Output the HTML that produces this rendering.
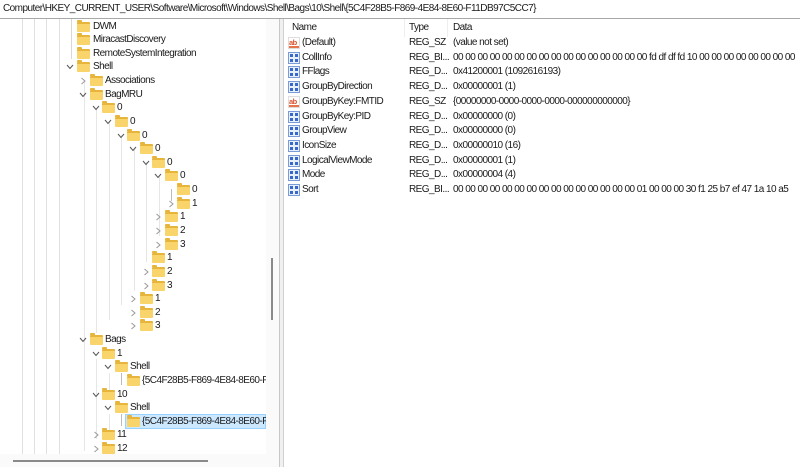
<!DOCTYPE html>
<html><head><meta charset="utf-8"><style>
*{margin:0;padding:0;box-sizing:border-box}
body{width:800px;height:467px;overflow:hidden;background:#fff;font-family:"Liberation Sans",sans-serif;font-size:10px;letter-spacing:-0.55px;color:#1a1a1a;position:relative}
.addr{position:absolute;left:0;top:0;width:800px;height:19px;border-bottom:1px solid #a8a8a8;padding:3px 0 0 3px;white-space:nowrap;overflow:hidden}
.tree{position:absolute;left:0;top:19px;width:279px;height:448px;background:#fff;overflow:hidden}
.vl{position:absolute;top:0;width:1px;height:448px;background:#e0e0e0}
.rows{position:absolute;left:0;top:0;width:266px;height:454px;overflow:hidden}
.r{position:absolute;height:14px;left:0;width:266px}
.f{position:absolute;top:2px;width:13px;height:10px;background:#f9d46b;border-top:2px solid #e8b53c;border-radius:1px}
.f:before{content:"";position:absolute;left:0;top:-4px;width:5px;height:2px;background:#e8b53c;border-radius:1px 1px 0 0}
.t{position:absolute;top:1px;white-space:nowrap}
.c{position:absolute;top:3px;width:8px;height:8px}
.sel{position:absolute;left:125px;top:414px;width:141px;height:15px;background:#cce8ff;border:1px solid #99d1ff}
.right{position:absolute;left:283px;top:19px;width:517px;height:448px;border-left:1px solid #d0d0d0;overflow:hidden}
.split{position:absolute;left:279px;top:19px;width:4px;height:448px;background:#f0f0f0;border-left:1px solid #c8c8c8}
.rr{position:absolute;left:0;height:15px;width:517px;white-space:nowrap}
.rr span{position:absolute;top:1px}
.ic{position:absolute;left:4px;top:1px;width:12px;height:12px}
</style></head><body>
<div class="addr">Computer\HKEY_CURRENT_USER\Software\Microsoft\Windows\Shell\Bags\10\Shell\{5C4F28B5-F869-4E84-8E60-F11DB97C5CC7}</div>
<div class="tree">
<div class="vl" style="left:22px"></div><div class="vl" style="left:34px"></div><div class="vl" style="left:46px"></div><div class="vl" style="left:59px"></div>
<div class="vl" style="left:71px;height:40px;background:#d8d8d8"></div>
<div class="vl" style="left:84px;top:62px;height:370px;background:#e6e6e6"></div>
<div class="vl" style="left:96px;top:89px;height:225px;background:#e6e6e6"></div>
<div class="vl" style="left:109px;top:103px;height:198px;background:#e6e6e6"></div>
<div class="vl" style="left:121px;top:116px;height:170px;background:#e6e6e6"></div>
<div class="vl" style="left:134px;top:130px;height:142px;background:#e6e6e6"></div>
<div class="vl" style="left:146px;top:143px;height:100px;background:#e6e6e6"></div>
<div class="vl" style="left:159px;top:157px;height:60px;background:#e6e6e6"></div>
<div class="vl" style="left:171px;top:170px;height:12px;background:#bbb"></div>
<div class="vl" style="left:96px;top:340px;height:80px;background:#e6e6e6"></div>
<div class="vl" style="left:109px;top:354px;height:20px;background:#e6e6e6"></div>
<div class="vl" style="left:121px;top:354px;height:12px;background:#bbb"></div>
<div class="vl" style="left:109px;top:395px;height:20px;background:#e6e6e6"></div>
<div class="vl" style="left:121px;top:395px;height:12px;background:#bbb"></div>
</div>
<div class="sel"></div>
<svg width="0" height="0" style="position:absolute"><defs>
<polyline id="dn" points="1,2 4,5.5 7,2" fill="none" stroke="#555" stroke-width="1"/>
<polyline id="rt" points="2.5,1 6,4 2.5,7" fill="none" stroke="#999" stroke-width="1"/>
</defs></svg>
<div class="rows">
<div class="r" style="top:19.5px"><div class="f" style="left:77px"></div><div class="t" style="left:93px">DWM</div></div>
<div class="r" style="top:33.1px"><div class="f" style="left:77px"></div><div class="t" style="left:93px">MiracastDiscovery</div></div>
<div class="r" style="top:46.8px"><div class="f" style="left:77px"></div><div class="t" style="left:93px">RemoteSystemIntegration</div></div>
<div class="r" style="top:60.4px"><svg class="c" style="left:66px"><use href="#dn"/></svg><div class="f" style="left:77px"></div><div class="t" style="left:93px">Shell</div></div>
<div class="r" style="top:74px"><svg class="c" style="left:79px"><use href="#rt"/></svg><div class="f" style="left:90px"></div><div class="t" style="left:105px">Associations</div></div>
<div class="r" style="top:87.7px"><svg class="c" style="left:79px"><use href="#dn"/></svg><div class="f" style="left:90px"></div><div class="t" style="left:105px">BagMRU</div></div>
<div class="r" style="top:101.3px"><svg class="c" style="left:92px"><use href="#dn"/></svg><div class="f" style="left:102px"></div><div class="t" style="left:117px">0</div></div>
<div class="r" style="top:114.9px"><svg class="c" style="left:104px"><use href="#dn"/></svg><div class="f" style="left:115px"></div><div class="t" style="left:130px">0</div></div>
<div class="r" style="top:128.5px"><svg class="c" style="left:117px"><use href="#dn"/></svg><div class="f" style="left:127px"></div><div class="t" style="left:142px">0</div></div>
<div class="r" style="top:142.2px"><svg class="c" style="left:129px"><use href="#dn"/></svg><div class="f" style="left:140px"></div><div class="t" style="left:155px">0</div></div>
<div class="r" style="top:155.8px"><svg class="c" style="left:142px"><use href="#dn"/></svg><div class="f" style="left:152px"></div><div class="t" style="left:167px">0</div></div>
<div class="r" style="top:169.4px"><svg class="c" style="left:154px"><use href="#dn"/></svg><div class="f" style="left:165px"></div><div class="t" style="left:180px">0</div></div>
<div class="r" style="top:183.1px"><div class="f" style="left:177px"></div><div class="t" style="left:192px">0</div></div>
<div class="r" style="top:196.7px"><svg class="c" style="left:167px"><use href="#rt"/></svg><div class="f" style="left:177px"></div><div class="t" style="left:192px">1</div></div>
<div class="r" style="top:210.3px"><svg class="c" style="left:154px"><use href="#rt"/></svg><div class="f" style="left:165px"></div><div class="t" style="left:180px">1</div></div>
<div class="r" style="top:224px"><svg class="c" style="left:154px"><use href="#rt"/></svg><div class="f" style="left:165px"></div><div class="t" style="left:180px">2</div></div>
<div class="r" style="top:237.6px"><svg class="c" style="left:154px"><use href="#rt"/></svg><div class="f" style="left:165px"></div><div class="t" style="left:180px">3</div></div>
<div class="r" style="top:251.2px"><div class="f" style="left:152px"></div><div class="t" style="left:167px">1</div></div>
<div class="r" style="top:264.8px"><svg class="c" style="left:142px"><use href="#rt"/></svg><div class="f" style="left:152px"></div><div class="t" style="left:167px">2</div></div>
<div class="r" style="top:278.5px"><svg class="c" style="left:142px"><use href="#rt"/></svg><div class="f" style="left:152px"></div><div class="t" style="left:167px">3</div></div>
<div class="r" style="top:292.1px"><svg class="c" style="left:129px"><use href="#rt"/></svg><div class="f" style="left:140px"></div><div class="t" style="left:155px">1</div></div>
<div class="r" style="top:305.7px"><svg class="c" style="left:129px"><use href="#rt"/></svg><div class="f" style="left:140px"></div><div class="t" style="left:155px">2</div></div>
<div class="r" style="top:319.4px"><svg class="c" style="left:129px"><use href="#rt"/></svg><div class="f" style="left:140px"></div><div class="t" style="left:155px">3</div></div>
<div class="r" style="top:333px"><svg class="c" style="left:79px"><use href="#dn"/></svg><div class="f" style="left:90px"></div><div class="t" style="left:105px">Bags</div></div>
<div class="r" style="top:346.6px"><svg class="c" style="left:92px"><use href="#dn"/></svg><div class="f" style="left:102px"></div><div class="t" style="left:117px">1</div></div>
<div class="r" style="top:360.3px"><svg class="c" style="left:104px"><use href="#dn"/></svg><div class="f" style="left:115px"></div><div class="t" style="left:130px">Shell</div></div>
<div class="r" style="top:373.9px"><div class="f" style="left:127px"></div><div class="t" style="left:142px">{5C4F28B5-F869-4E84-8E60-F1</div></div>
<div class="r" style="top:387.5px"><svg class="c" style="left:92px"><use href="#dn"/></svg><div class="f" style="left:102px"></div><div class="t" style="left:117px">10</div></div>
<div class="r" style="top:401.1px"><svg class="c" style="left:104px"><use href="#dn"/></svg><div class="f" style="left:115px"></div><div class="t" style="left:130px">Shell</div></div>
<div class="r" style="top:414.8px"><div class="f" style="left:127px"></div><div class="t" style="left:142px">{5C4F28B5-F869-4E84-8E60-F1</div></div>
<div class="r" style="top:428.4px"><svg class="c" style="left:92px"><use href="#rt"/></svg><div class="f" style="left:102px"></div><div class="t" style="left:117px">11</div></div>
<div class="r" style="top:442px"><svg class="c" style="left:92px"><use href="#rt"/></svg><div class="f" style="left:102px"></div><div class="t" style="left:117px">12</div></div>
</div>
<div style="position:absolute;left:266px;top:19px;width:13px;height:435px;background:#fafafa"></div>
<div style="position:absolute;left:271px;top:258px;width:2px;height:62px;background:#8a8a8a"></div>
<div style="position:absolute;left:0;top:454px;width:279px;height:13px;background:#fafafa"></div>
<div style="position:absolute;left:13px;top:460px;width:195px;height:2px;background:#8a8a8a"></div>
<div class="split"></div>
<div class="right">
<div style="position:absolute;left:120px;top:0;width:1px;height:18px;background:#eee"></div>
<div style="position:absolute;left:163px;top:0;width:1px;height:18px;background:#eee"></div>
<div class="rr" style="top:2px"><span style="left:8px">Name</span><span style="left:125px">Type</span><span style="left:169px">Data</span></div>
<svg width="0" height="0" style="position:absolute"><defs>
<g id="ab"><rect x="0.5" y="0.5" width="11" height="11" fill="#fff" stroke="#ddd"/><text x="1" y="8" font-size="7.5" font-family="Liberation Sans" font-weight="bold" fill="#d8502c">ab</text><rect x="1" y="9" width="10" height="2" fill="#e8734a"/></g>
<g id="bn"><rect x="0.5" y="0.5" width="11" height="11" fill="#e8f0fc" stroke="#7a9ad8"/><rect x="2" y="2" width="3" height="3" fill="#3a68c8"/><rect x="7" y="2" width="3" height="3" fill="#3a68c8"/><rect x="2" y="7" width="3" height="3" fill="#3a68c8"/><rect x="7" y="7" width="3" height="3" fill="#3a68c8"/></g>
</defs></svg>
<div class="rr" style="top:17px"><svg class="ic"><use href="#ab"/></svg><span style="left:18px">(Default)</span><span style="left:125px">REG_SZ</span><span style="left:169px">(value not set)</span></div>
<div class="rr" style="top:31.7px"><svg class="ic"><use href="#bn"/></svg><span style="left:18px">CollInfo</span><span style="left:125px">REG_BI...</span><span style="left:169px">00 00 00 00 00 00 00 00 00 00 00 00 00 00 00 00 fd df df fd 10 00 00 00 00 00 00 00 00</span></div>
<div class="rr" style="top:46.4px"><svg class="ic"><use href="#bn"/></svg><span style="left:18px">FFlags</span><span style="left:125px">REG_D...</span><span style="left:169px">0x41200001 (1092616193)</span></div>
<div class="rr" style="top:61.1px"><svg class="ic"><use href="#bn"/></svg><span style="left:18px">GroupByDirection</span><span style="left:125px">REG_D...</span><span style="left:169px">0x00000001 (1)</span></div>
<div class="rr" style="top:75.8px"><svg class="ic"><use href="#ab"/></svg><span style="left:18px">GroupByKey:FMTID</span><span style="left:125px">REG_SZ</span><span style="left:169px">{00000000-0000-0000-0000-000000000000}</span></div>
<div class="rr" style="top:90.5px"><svg class="ic"><use href="#bn"/></svg><span style="left:18px">GroupByKey:PID</span><span style="left:125px">REG_D...</span><span style="left:169px">0x00000000 (0)</span></div>
<div class="rr" style="top:105.2px"><svg class="ic"><use href="#bn"/></svg><span style="left:18px">GroupView</span><span style="left:125px">REG_D...</span><span style="left:169px">0x00000000 (0)</span></div>
<div class="rr" style="top:119.9px"><svg class="ic"><use href="#bn"/></svg><span style="left:18px">IconSize</span><span style="left:125px">REG_D...</span><span style="left:169px">0x00000010 (16)</span></div>
<div class="rr" style="top:134.6px"><svg class="ic"><use href="#bn"/></svg><span style="left:18px">LogicalViewMode</span><span style="left:125px">REG_D...</span><span style="left:169px">0x00000001 (1)</span></div>
<div class="rr" style="top:149.3px"><svg class="ic"><use href="#bn"/></svg><span style="left:18px">Mode</span><span style="left:125px">REG_D...</span><span style="left:169px">0x00000004 (4)</span></div>
<div class="rr" style="top:164px"><svg class="ic"><use href="#bn"/></svg><span style="left:18px">Sort</span><span style="left:125px">REG_BI...</span><span style="left:169px">00 00 00 00 00 00 00 00 00 00 00 00 00 00 00 01 00 00 00 30 f1 25 b7 ef 47 1a 10 a5</span></div>
</div>
</body></html>
